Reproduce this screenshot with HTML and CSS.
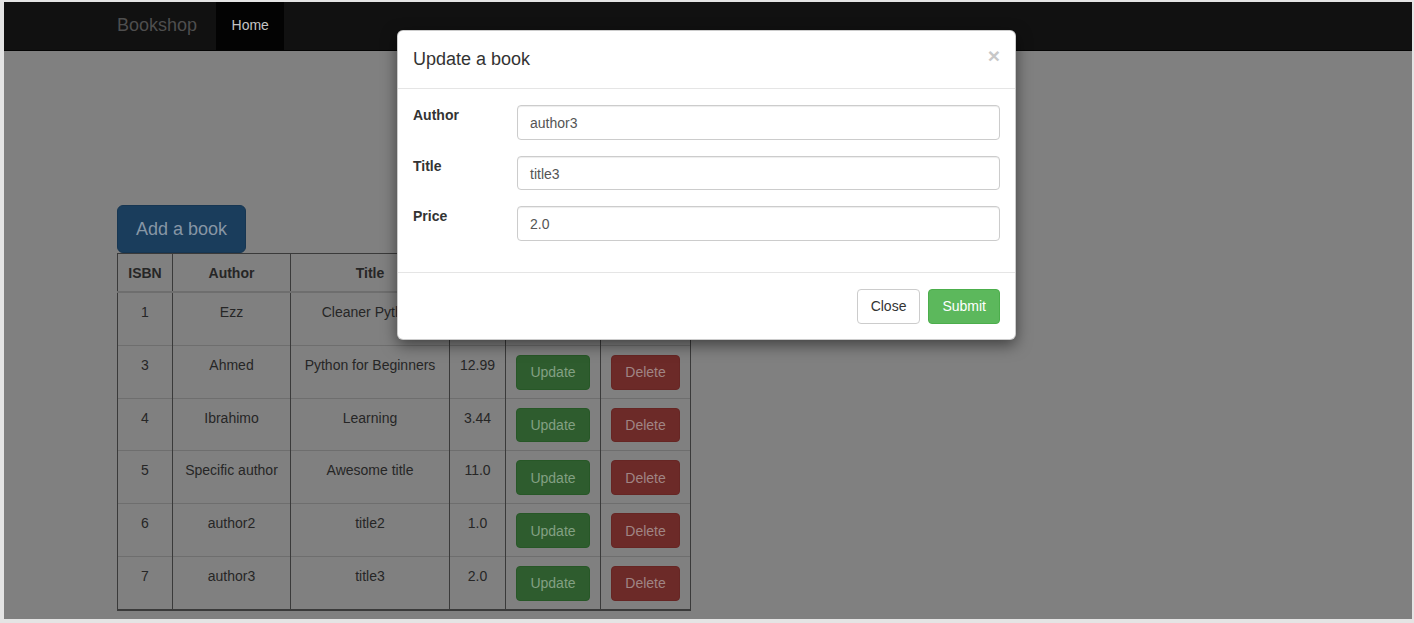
FILE: index.html
```html
<!DOCTYPE html>
<html lang="en">
<head>
<meta charset="utf-8">
<title>Bookshop</title>
<link rel="stylesheet" href="styles.css">
</head>
<body>
<div class="screen">
  <nav class="navbar">
    <div class="nav-inner">
      <a class="brand">Bookshop</a>
      <a class="nav-link active">Home</a>
    </div>
  </nav>
  <main class="content">
    <button class="btn-add">Add a book</button>
    <table class="books">
      <colgroup>
        <col class="w-isbn"><col class="w-author"><col class="w-title"><col class="w-price"><col class="w-upd"><col class="w-del">
      </colgroup>
      <thead>
        <tr><th>ISBN</th><th>Author</th><th>Title</th><th>Price</th><th>Update</th><th>Delete</th></tr>
      </thead>
      <tbody>
        <tr><td>1</td><td>Ezz</td><td>Cleaner Python</td><td>10.0</td><td><button class="btn btn-upd">Update</button></td><td><button class="btn btn-del">Delete</button></td></tr>
        <tr><td>3</td><td>Ahmed</td><td>Python for Beginners</td><td>12.99</td><td><button class="btn btn-upd">Update</button></td><td><button class="btn btn-del">Delete</button></td></tr>
        <tr><td>4</td><td>Ibrahimo</td><td>Learning</td><td>3.44</td><td><button class="btn btn-upd">Update</button></td><td><button class="btn btn-del">Delete</button></td></tr>
        <tr><td>5</td><td>Specific author</td><td>Awesome title</td><td>11.0</td><td><button class="btn btn-upd">Update</button></td><td><button class="btn btn-del">Delete</button></td></tr>
        <tr><td>6</td><td>author2</td><td>title2</td><td>1.0</td><td><button class="btn btn-upd">Update</button></td><td><button class="btn btn-del">Delete</button></td></tr>
        <tr><td>7</td><td>author3</td><td>title3</td><td>2.0</td><td><button class="btn btn-upd">Update</button></td><td><button class="btn btn-del">Delete</button></td></tr>
      </tbody>
    </table>
  </main>

  <div class="modal">
    <div class="modal-header">
      <h4 class="modal-title">Update a book</h4>
      <span class="close">&times;</span>
    </div>
    <div class="modal-body">
      <div class="form-row">
        <label class="form-label">Author</label>
        <div class="form-input">author3</div>
      </div>
      <div class="form-row">
        <label class="form-label">Title</label>
        <div class="form-input">title3</div>
      </div>
      <div class="form-row">
        <label class="form-label">Price</label>
        <div class="form-input">2.0</div>
      </div>
    </div>
    <div class="modal-footer">
      <button class="mbtn mbtn-close">Close</button>
      <button class="mbtn mbtn-submit">Submit</button>
    </div>
  </div>
</div>
</body>
</html>
```

FILE: styles.css
```css
* { box-sizing: border-box; }

body {
  margin: 0;
  background: #e4e4e4;
  font-family: "Liberation Sans", Arial, sans-serif;
  font-size: 14px;
  line-height: 20px;
}

.screen {
  position: relative;
  width: 1408px;
  height: 617px;
  margin: 2px 0 0 4px;
  background: #808080;
  overflow: hidden;
}

/* navbar */
.navbar {
  height: 49px;
  background: #111111;
  border-bottom: 1px solid #040404;
}
.nav-inner {
  display: flex;
  height: 48px;
  padding-left: 113px;
}
.brand {
  font-size: 18px;
  line-height: 46px;
  color: #4e4e4e;
  margin-right: 19px;
}
.nav-link {
  display: block;
  padding: 0 15px 0 15.5px;
  line-height: 46px;
  color: #c4c4c4;
}
.nav-link.active { background: #030303; }

/* content */
.content {
  padding: 154px 0 0 113px;
}
.btn-add {
  display: block;
  height: 48px;
  padding: 0 18px;
  font-family: inherit;
  font-size: 18px;
  color: #8796a5;
  background: #1a3d5c;
  border: 1px solid #173652;
  border-radius: 6px;
}

.books {
  border-collapse: collapse;
  table-layout: fixed;
  width: 573px;
  color: #262626;
  text-align: center;
  border: 1px solid #3a3a3a;
  border-bottom: 2px solid #3a3a3a;
}
.w-isbn { width: 55px; }
.w-author { width: 118px; }
.w-title { width: 159px; }
.w-price { width: 56px; }
.w-upd { width: 95px; }
.w-del { width: 90px; }

.books th,
.books td {
  border-left: 1px solid #3a3a3a;
  border-right: 1px solid #3a3a3a;
  border-top: 1px solid #6e6e6e;
  white-space: nowrap;
  vertical-align: top;
}
.books th {
  padding: 9px 4px 8px;
  font-weight: bold;
  border-top: 1px solid #3a3a3a;
  border-bottom: 2px solid #6e6e6e;
}
.books td {
  padding: 9px 4px 8px;
}

.btn {
  height: 34.8px;
  padding: 0 13px;
  font-family: inherit;
  font-size: 14px;
  border-radius: 4px;
  border: 1px solid transparent;
}
.btn-upd {
  background: #2e5c2e;
  border-color: #275727;
  color: #83a083;
}
.btn-del {
  background: #6c2a28;
  border-color: #662624;
  color: #a08584;
}

/* modal */
.modal {
  position: absolute;
  left: 393px;
  top: 28px;
  width: 619px;
  background: #fff;
  border: 1px solid rgba(0,0,0,.2);
  border-radius: 6px;
  box-shadow: 0 5px 15px rgba(0,0,0,.5);
}
.modal-header {
  display: flex;
  justify-content: space-between;
  align-items: flex-start;
  padding: 15px 15px 16px;
  border-bottom: 1px solid #e5e5e5;
}
.modal-title {
  margin: 0;
  font-size: 18px;
  font-weight: normal;
  line-height: 26px;
  color: #333;
}
.close {
  font-size: 21px;
  font-weight: bold;
  line-height: 21px;
  color: #c8c8c8;
  margin-top: -1px;
}

.modal-body {
  padding: 16px 15px 15px;
}
.form-row {
  display: flex;
  margin-bottom: 16px;
}
.form-label {
  width: 104px;
  padding-top: 0;
  font-weight: bold;
  color: #333;
}
.form-input {
  flex: 1;
  height: 34.5px;
  padding: 7px 12px;
  border: 1px solid #ccc;
  border-radius: 4px;
  color: #555;
  box-shadow: inset 0 1px 1px rgba(0,0,0,.075);
}

.modal-footer {
  display: flex;
  justify-content: flex-end;
  gap: 8px;
  padding: 16px 15px 15px;
  border-top: 1px solid #e5e5e5;
}
.mbtn {
  height: 35px;
  padding: 0 13px;
  font-family: inherit;
  font-size: 14px;
  border-radius: 4px;
  border: 1px solid #ccc;
}
.mbtn-close {
  background: #fff;
  color: #333;
}
.mbtn-submit {
  background: #5cb85c;
  border-color: #4cae4c;
  color: #fff;
}
```
